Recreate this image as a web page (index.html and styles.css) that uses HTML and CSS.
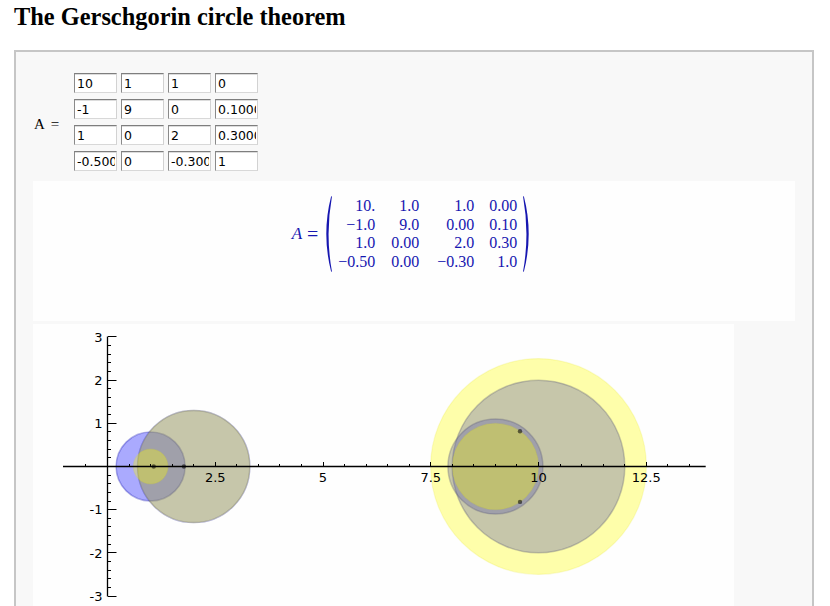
FILE: index.html
```html
<!DOCTYPE html>
<html>
<head>
<meta charset="utf-8">
<title>The Gerschgorin circle theorem</title>
<link rel="stylesheet" href="styles.css">
</head>
<body>
<h2 class="title">The Gerschgorin circle theorem</h2>
<div class="cell">
  <div class="controls">
    <span class="lbl">A =</span>
    <div class="inputs">
      <input value="10"><input value="1"><input value="1"><input value="0">
      <input value="-1"><input value="9"><input value="0"><input value="0.100000">
      <input value="1"><input value="0"><input value="2"><input value="0.300000">
      <input value="-0.500000"><input value="0"><input value="-0.300000"><input value="1">
    </div>
  </div>
  <div class="output">
    <div class="math">
      <span class="mi">A</span><span class="mo">=</span>
      <svg class="paren" width="9" height="76" viewBox="0 0 9 76"><path d="M8.2 0 Q-1.6 38 8.2 76 L8.9 75.3 Q2.2 38 8.9 0.7 Z"/></svg>
      <div class="arr">
        <span>10.</span><span>1.0</span><span>1.0</span><span>0.00</span>
        <span>−1.0</span><span>9.0</span><span>0.00</span><span>0.10</span>
        <span>1.0</span><span>0.00</span><span>2.0</span><span>0.30</span>
        <span>−0.50</span><span>0.00</span><span>−0.30</span><span>1.0</span>
      </div>
      <svg class="paren" width="9" height="76" viewBox="0 0 9 76"><path d="M0.8 0 Q10.6 38 0.8 76 L0.1 75.3 Q6.8 38 0.1 0.7 Z"/></svg>
    </div>
  </div>
  <div class="plot">
    <svg width="701" height="300" viewBox="0 0 701 300">
      <g class="rows">
        <circle cx="505.5" cy="142.5" r="86.3"/>
        <circle cx="462.4" cy="142.5" r="47.5"/>
        <circle cx="160.7" cy="142.5" r="56.1"/>
        <circle cx="117.6" cy="142.5" r="34.5"/>
      </g>
      <g class="cols">
        <circle cx="505.5" cy="142.5" r="107.9"/>
        <circle cx="462.4" cy="142.5" r="43.1"/>
        <circle cx="160.7" cy="142.5" r="56.1"/>
        <circle cx="117.6" cy="142.5" r="17.3"/>
      </g>
      <g class="axes">
        <path d="M30 142.5 H672.7 M74.5 12.5 V272.5"/>
        <path d="M52.5 140 V142 M96.5 140 V142 M117.5 140 V142 M139.5 140 V142 M160.5 140 V142 M203.5 140 V142 M225.5 140 V142 M246.5 140 V142 M268.5 140 V142 M311.5 140 V142 M333.5 140 V142 M354.5 140 V142 M376.5 140 V142 M419.5 140 V142 M440.5 140 V142 M462.5 140 V142 M483.5 140 V142 M527.5 140 V142 M548.5 140 V142 M570.5 140 V142 M591.5 140 V142 M634.5 140 V142 M656.5 140 V142"/>
        <path d="M182.5 138 V142 M290.5 138 V142 M397.5 138 V142 M505.5 138 V142 M613.5 138 V142"/>
        <path d="M75 12.5 H83.5 M75 56.5 H83.5 M75 99.5 H83.5 M75 185.5 H83.5 M75 228.5 H83.5 M75 272.5 H83.5"/>
        <path d="M75 21.5 H78 M75 30.5 H78 M75 38.5 H78 M75 47.5 H78 M75 64.5 H78 M75 73.5 H78 M75 82.5 H78 M75 90.5 H78 M75 107.5 H78 M75 116.5 H78 M75 125.5 H78 M75 133.5 H78 M75 151.5 H78 M75 159.5 H78 M75 168.5 H78 M75 177.5 H78 M75 194.5 H78 M75 202.5 H78 M75 211.5 H78 M75 220.5 H78 M75 237.5 H78 M75 246.5 H78 M75 254.5 H78 M75 263.5 H78"/>
      </g>
      <g class="eig">
        <circle cx="487" cy="107.3" r="2.2"/>
        <circle cx="487" cy="177.9" r="2.2"/>
        <circle cx="120.7" cy="142.5" r="2.2"/>
        <circle cx="150.9" cy="142.5" r="2.2"/>
      </g>
      <g class="xl">
        <text x="182.25" y="157.5">2.5</text>
        <text x="290" y="157.5">5</text>
        <text x="397.75" y="157.5">7.5</text>
        <text x="505.5" y="157.5">10</text>
        <text x="613.25" y="157.5">12.5</text>
      </g>
      <g class="yl">
        <text x="69.5" y="17.6">3</text>
        <text x="69.5" y="60.8">2</text>
        <text x="69.5" y="104">1</text>
        <text x="69.5" y="190.4">-1</text>
        <text x="69.5" y="233.6">-2</text>
        <text x="69.5" y="276.8">-3</text>
      </g>
    </svg>
  </div>
</div>
</body>
</html>
```

FILE: styles.css
```css
html, body {
  margin: 0;
  background: #ffffff;
  overflow: hidden;
}
body {
  padding: 0 16px 0 14px;
  font-family: "Liberation Serif", "Times New Roman", serif;
  color: #000;
}
.title {
  font: bold 24.4px/27px "Liberation Serif", serif;
  margin: 3px 0 20px;
}
.cell {
  width: 800px;
  box-sizing: border-box;
  border: 2px solid #c6c6c6;
  border-bottom: none;
  background: #f8f8f8;
  padding: 21px 17px 40px;
}
.controls {
  display: flex;
  align-items: center;
}
.lbl {
  width: 40px;
  margin-left: 1px;
  margin-top: 4px;
  font-size: 15px;
  line-height: 18px;
  word-spacing: 3px;
}
.inputs {
  display: grid;
  grid-template-columns: repeat(4, 43px);
  column-gap: 4px;
  row-gap: 6px;
}
.inputs input {
  width: 43px;
  height: 20px;
  box-sizing: border-box;
  margin: 0;
  padding: 1px 1px 0 2px;
  font: 12.5px "DejaVu Sans", sans-serif;
  color: #000;
  background: #fff;
  border-style: solid;
  border-width: 1px;
  border-color: #7e7e7e #d2d2d2 #d8d8d8 #8a8a8a;
  box-shadow: inset 0 1px 0 #dcdcdc;
  outline: none;
}
.output {
  margin-top: 10px;
  height: 140px;
  box-sizing: border-box;
  padding-top: 15px;
  background: #fefefe;
  display: flex;
  justify-content: center;
  align-items: flex-start;
}
.math {
  display: flex;
  align-items: center;
  color: #1616b0;
  font: 16px/18.5px "Liberation Serif", serif;
  margin-left: -4px;
}
.mi {
  font-style: italic;
  font-size: 17px;
}
.mo {
  font-size: 20px;
  margin: 0 5px 0 5px;
}
.paren path {
  fill: #1616b0;
}
.arr {
  display: grid;
  grid-template-columns: 43px 44px 55px 43px;
  margin: 0 6px 0 0;
}
.arr span {
  text-align: right;
}
.plot {
  margin-top: 3px;
  width: 701px;
  height: 300px;
  background: #fefefe;
}
.plot svg {
  display: block;
}
.rows circle {
  fill: #0000ff;
  fill-opacity: 0.33;
  stroke: #0000aa;
  stroke-opacity: 0.3;
  stroke-width: 1.5;
}
.cols circle {
  fill: #ffff00;
  fill-opacity: 0.33;
  stroke: #dddd00;
  stroke-opacity: 0.15;
  stroke-width: 1.2;
}
.axes path {
  stroke: #000;
  stroke-width: 1;
  fill: none;
}
.axes path:first-child {
  stroke-width: 1.3;
}
.eig circle {
  fill: #000;
  fill-opacity: 0.55;
}
.xl text, .yl text {
  font: 13px "DejaVu Sans", sans-serif;
  fill: #000;
}
.xl text {
  text-anchor: middle;
}
.yl text {
  text-anchor: end;
}
```
